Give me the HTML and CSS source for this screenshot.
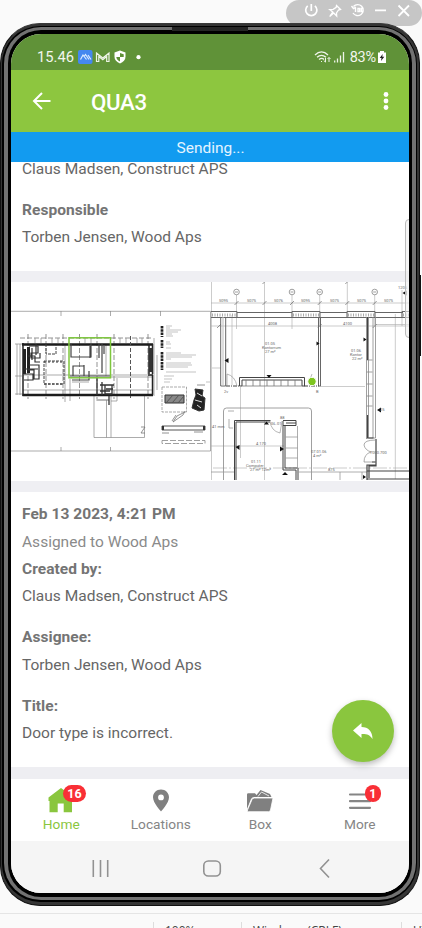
FILE: index.html
```
<!DOCTYPE html>
<html lang="en">
<head>
<meta charset="utf-8">
<title>QUA3</title>
<link rel="stylesheet" href="styles.css">
</head>
<body>
<div class="window-tools">
  <svg viewBox="0 0 136 26" width="136" height="26" fill="none" stroke="#fff" stroke-width="1.700">
    <path d="M21.700 5.800a5.600 5.600 0 1 0 7.200 0M25.300 4v7"/>
    <path d="M50.500 5.500l4 4-2 .5-2 3 .2 3-3-3-4 3.500 3-4.500-3-2.500 3.500-.2 3-2z" stroke-width="1.300"/>
    <path d="M67.500 6.500a5.500 5.500 0 1 1-.5 6.500M65.500 6l2 2.500 2.500-1.500M69.500 8v4M72 8.500h1.700v3H72zM75.300 8.500H77v3h-1.700z" stroke-width="1.400"/>
    <path d="M89 10.300h11M112.500 5.500l10.500 10.500M123 5.500l-10.500 10.500" stroke-width="1.800"/>
  </svg>
</div>
<div class="phone">
<div class="rim"><div class="metal"><div class="bezel">
<main class="screen">
  <header class="status">
    <span class="time">15.46</span>
    <svg class="status-icons" viewBox="0 0 70 16" width="70" height="16">
      <rect x="0" y="1" width="14.500" height="14" rx="2" fill="#4588ef"/>
      <path d="M2.500 10.500l2.500-4.500 3.500 4.500M6.500 7l1-1.500 3.500 5M10 6l3 4.500" stroke="#dcecff" fill="none" stroke-width="1.200"/>
      <path d="M18.500 12.500V4l6.300 5 6.200-5v8.500h-2.300V7.500l-3.900 3.300-4-3.300v5z" stroke="#eef4e8" fill="none" stroke-width="1.200"/>
      <path d="M42 1.500l5.500 2v4.300c0 3-2.200 5.400-5.500 6.700-3.300-1.300-5.500-3.700-5.500-6.700V3.500z" fill="#fff"/>
      <path d="M42 4v4h3.700V5.200zM42 8v4.500c-2-1-3.500-2.500-3.700-4.500z" fill="#5f9137"/>
      <circle cx="60.500" cy="8.200" r="2.100" fill="#fff"/>
    </svg>
    <svg class="signal" viewBox="0 0 32 14" width="32" height="14" fill="none" stroke="#edf3e8" stroke-width="1.300">
      <path d="M1 5c4-4 9-4 13 0M3 7.300c3-2.600 6-2.600 9 0M5 9.500c2-1.600 3.500-1.600 5 0"/>
      <path d="M7.500 12v-1M11.500 8v4M9.800 10.500l1.700 1.700M15 12V7.500M13.500 9L15 7.500 16.500 9" stroke-width="1"/>
      <path d="M20.700 12.500v-2M23.500 12.500V8.500M26.500 12.500V5.500M29.500 12.500V2" stroke-width="1.300"/>
    </svg>
    <span class="percent">83%</span>
    <svg viewBox="0 0 8 12" width="8" height="12"><path d="M2 0h4v1.500h2V12H0V1.500h2z" fill="#fff"/><path d="M4.700 3L1.700 7h1.800l-.5 3 3.300-4.200H4.300z" fill="#222"/></svg>
  </header>
  <div class="appbar">
    <svg viewBox="0 0 20 18" width="20" height="18" fill="none" stroke="#fff" stroke-width="2"><path d="M18.500 9H2M10 1L2 9l8 8"/></svg>
    <h1>QUA3</h1>
    <svg viewBox="0 0 6 18" width="6" height="18" fill="#fff"><circle cx="3" cy="2.500" r="2.400"/><circle cx="3" cy="9" r="2.400"/><circle cx="3" cy="15.500" r="2.400"/></svg>
  </div>
  <div class="sending">Sending...</div>
  <section class="people">
    <p class="cut">Claus Madsen, Construct APS</p>
    <p class="label">Responsible</p>
    <p>Torben Jensen, Wood Aps</p>
  </section>
  <section class="plans">
    <svg viewBox="11 282 200 198" width="200" height="198" fill="none" stroke="#333">
      <g stroke="#888" stroke-width=".7">
        <path d="M11 311.300H210.500V451H11M61 311v5M61 447v4M110.500 311v5M110.500 447v4M160.500 311v5"/>
        <path d="M94 396v41.500h50.500V396M106.500 400v37.500M111 396v41.500M96 400h13M70 379v22M65 379v23"/>
        <path d="M20 338h133M28 334v65M46 334v65M63 334v65M79.500 334v65M97 334v65M114 334v65M148 334v65" stroke="#666" stroke-dasharray="5 2"/>
        <path d="M17 344v51M15 344h7M15 376h7M15 394h7M20 344v51M23 375h130M23 390h130M35 338v5M41 338v5M52 338v5M58 338v5M85 338v5M91 338v5M120 338v5M126 338v5M137 338v5M142 338v5M154 338v58M157 355v35"/>
        <path d="M111 377h41M117 378v23h-6M65 344v35M106 344v32M72 382h17M97 400h12"/>
      </g>
      <path d="M22 344.500H153M22.500 395H153" stroke="#1c1c1c" stroke-width="2.400"/>
      <path d="M23 343v53M149 344v30M152.500 344v30M148 375h5M152.500 375v20" stroke="#222" stroke-width="1.500"/>
      <path d="M24.500 349v25M28.500 347v26" stroke="#222" stroke-width="3"/>
      <path d="M29 346h9v7h-7v5h9v-5M28 356h7v6h5M29 365h10v14h-5v-9h-6M24 374h9v6H24M32 348v12M36 344v11M24 369h14" stroke="#333" stroke-width="1.200"/>
      <path d="M46 344v10h10v-9M44 361h20v23H44z" stroke="#444" stroke-dasharray="3 1"/>
      <path d="M44 362h20M44 384h20" stroke="#333" stroke-dasharray="2 2"/>
      <path d="M71 344v13h20v-13M73 366h11v10H73zM84 365v11h-3M70 376h41M99 344v14M102 344v29M72 380h17v-9M90 346v12M104 346v8" stroke="#444" stroke-width="1.200"/>
      <path d="M100 385h14M102 382v13M105 385v9h7v-9M106 389h7M100 391h10M97 378v17M109 396v9" stroke="#333" stroke-width="1.300"/>
      <path d="M130.500 336v62" stroke="#555" stroke-dasharray="4 2"/>
      <path d="M150.800 348v24" stroke="#333" stroke-width="3.500"/>
      <rect x="69" y="337.800" width="41.500" height="40" stroke="#7dc63c" stroke-width="1.500"/>
      <path d="M162 326v11M162 340v8M162 352v18" stroke="#222" stroke-width="2.700" stroke-dasharray="2.500 .8"/>
      <path d="M166 326h6M166 328h4M166 330h15M166 332h12M166 334h6M166 336h7M166 342h4M166 344h5M166 348h5M166 353h15M166 355h30M166 357h26M166 359h5M166 363h25M166 365h26M166 367h22M166 372h30M164 376h10M164 379h8M164 382h6M206 382h4" stroke="#aaa" stroke-width=".7"/>
      <path d="M162 387h24.500v25H162z" stroke="#888" stroke-width=".7" stroke-dasharray="3 1"/>
      <path d="M165 395h19v8h-19z" fill="#888"/><path d="M166 403l7-8M172 403l7-8M178 403l6-7" stroke="#555"/>
      <path d="M185 411l-2 4-10 7 4-6 8-4M172 421l4-6" stroke="#777" stroke-width=".8"/>
      <path d="M195 389l8 1-1 6 3 2-1 12-5 1-7-3 2-8 2-5z" fill="#222"/><path d="M197 393l5 3M195 400l7 2M197 405l4 3" stroke="#ddd"/>
      <path d="M162 426h43v4h-43z" stroke="#555"/><path d="M163 426v4M204 426v4" stroke-width="2"/>
      <path d="M162 440.500h43v3h-43z" stroke="#888" stroke-width=".8" stroke-dasharray="6 2"/>
      <path d="M162 433h7M194 432h9M197 385h8M141 427h4l-4 6h4" stroke="#777" stroke-width=".8"/>
    </svg>
    <svg viewBox="211 282 198 198" width="198" height="198" fill="none" stroke="#444">
      <g stroke="#aaa" stroke-width=".6">
        <path d="M211.500 282v198M211 303H409M211 326H409M236.500 289v40M264.500 282v198M292 289v40M319.700 294v32M347.300 282v35M374.700 294v32M240.500 387v71M212 368h9M211 446h73M320 386.500h45M402 290v36M395.300 314v165M376 324.500h33M232 315v70"/>
        <path d="M213 468H409" stroke-dasharray="14 2 2 2"/>
        <path d="M234.500 305l4-4M262.500 305l4-4M290 305l4-4M317.700 305l4-4M345.300 305l4-4M372.700 305l4-4M262.500 284l4-4M345.300 284l4-4M217 328l4-4M317.700 328l4-4M372.700 328l4-4" stroke="#555"/>
      </g>
      <g fill="#fff" stroke="#777" stroke-width=".7"><circle cx="236.500" cy="292" r="2.800"/><circle cx="292" cy="292" r="2.800"/><circle cx="319.700" cy="292" r="2.800"/><circle cx="374.700" cy="292" r="2.800"/><path d="M235 292h3M290.500 292h3M318.200 292h3M373.200 292h3"/></g>
      <path d="M211 311.500h26v6h-26M237 312.500h55M237 317.500h55M292 311.500h28v6h-28zM320 312.500h27M320 317.500h27M347 311.500h28v6h-28zM375 312.500h28M375 317.500h28M409 311.500h-7v6h7" stroke="#666"/>
      <path d="M212 315h24M293 315h26M348 315h26M403 315h6" stroke="#aaa" stroke-width="3" stroke-dasharray="1 1.500"/>
      <path d="M220.700 317v69h5v-69M318.500 317v69h2v-69" stroke="#666"/>
      <path d="M223 317v69" stroke="#bbb"/>
      <path d="M239.500 386v-8.500h65V386h-2.500v-6H242v6z" stroke-width="1"/>
      <path d="M242 386h60M246 380v6M253 380v6M260 380v6M267 380v6M274 380v6M281 380v6M288 380v6M295 380v6" stroke="#777" stroke-width=".8"/>
      <path d="M226 386h14M304 386h15" stroke-dasharray="4 1 1 1"/>
      <path d="M223.500 480v-69q0-3 3-3h82q3 0 3 3v69" stroke="#888" stroke-width=".8"/>
      <path d="M234.500 480v-59.500h36M236 480v-58h34M283 421v49h13v10M285 425v43h13v12M283 420.500h13v5h-13M286 423h10" stroke-width="1"/>
      <path d="M285 437h13M285 448h13M285 458h13M297.500 426v43M229 419v9h4M234 411h-6M211 472h23M296 472h71M340 472v8M362 472v8" stroke="#999" stroke-width=".8"/>
      <path d="M227 374q8 2 10 12M227 374v12M270 421q1 10 10 12l2-12M312 374q-3 5-1 9" stroke="#888" stroke-width=".6"/>
      <path d="M366.500 317v122M368.500 317v121h7V317M373 317v121M366.500 360h6M366.500 372h6M366.500 384h6M366.500 396h6M366.500 406h6" stroke="#888" stroke-width=".8"/>
      <path d="M367.500 317v43M367.500 415v23h6M367 480v-15h9M369 478v-12h7v-4h-4M367 471h42M367 479h42M376 439v24" stroke-width="1.200"/>
      <path d="M376 440q-12 0-12 5 1 5 7 7-7 2-7 10h12" stroke="#888" stroke-width=".7"/>
      <path d="M224.500 360.500l4-2.500v5zM269 378l-2.500-3h5zM266.500 421.500l2.500 3h-5zM235.500 447l4-2v5zM284 449l-4-2.500v5zM319.500 343.500l-3-2v4zM366.500 339.500l-3-2v4zM377 410l4-2.500v5zM402.500 293l4-2.500v5zM366 477l-3-2v4zM285 472l-3 3h6z" fill="#111" stroke="none"/>
      <g class="plan-text" fill="#666" stroke="none">
        <text x="219" y="301.500">5095</text><text x="247" y="301.500">5075</text><text x="274" y="301.500">5076</text><text x="301" y="301.500">5095</text><text x="330" y="301.500">5075</text><text x="357" y="301.500">5075</text><text x="384" y="301.500">5075</text>
        <text x="268" y="325">4008</text><text x="343" y="325">4100</text>
        <text x="265" y="345">01.05</text><text x="262" y="349">Kontorrum</text><text x="265" y="353">27 m²</text>
        <text x="351" y="352">01.06</text><text x="350" y="356">Kontor</text><text x="352" y="360">22 m²</text>
        <text x="251" y="463">01.11</text><text x="246" y="467">Computer</text><text x="250" y="471">27 m² 12m²</text><text x="311" y="453">07.01.06</text><text x="313" y="457">4 m²</text>
        <text x="280" y="419">88</text><text x="271" y="425">GL.01</text><text x="224" y="393">2v</text><text x="212" y="428">41 mm</text><text x="256" y="445">4 170</text><text x="398" y="289">1205</text><text x="370" y="454">7000.700</text><text x="316" y="393">B</text><text x="328" y="471">875</text><text x="380" y="411">25</text>
      </g>
      <circle cx="312" cy="381.500" r="4.200" fill="#7ec51f" stroke="#fff"/>
    </svg>
  </section>
  <section class="details">
    <p class="label">Feb 13 2023, 4:21 PM</p>
    <p class="muted">Assigned to Wood Aps</p>
    <p class="label">Created by:</p>
    <p>Claus Madsen, Construct APS</p>
    <p class="label gap">Assignee:</p>
    <p>Torben Jensen, Wood Aps</p>
    <p class="label gap">Title:</p>
    <p>Door type is incorrect.</p>
  </section>
  <nav class="tabs">
    <div class="tab active">
      <svg viewBox="0 0 28 26" width="28" height="26" fill="#8ac63e"><path d="M14 1L1.500 10.500V14h1v11.200h8.200V16.500h6v8.700H25V14h2v-3.500z"/></svg>
      <span>Home</span><b class="badge wide">16</b>
    </div>
    <div class="tab">
      <svg viewBox="0 0 28 26" width="28" height="26"><path fill-rule="evenodd" d="M14 2.500c-4.600 0-8 3.400-8 7.800C6 16 14 24.500 14 24.500S22 16 22 10.300c0-4.400-3.400-7.800-8-7.800zm0 5a2.900 2.900 0 1 1 0 5.800 2.900 2.900 0 0 1 0-5.800z" fill="#808080"/></svg>
      <span>Locations</span>
    </div>
    <div class="tab">
      <svg viewBox="0 0 28 26" width="28" height="26" fill="#808080"><path d="M1 22V7.500q0-1.300 1.300-1.300H9L10.500 8l4-5 9.500 4 1.500 3H8.500Q6 10 5 12z"/><path d="M8.500 11H27L24.500 23q-.4 1.700-2 1.700H2.500q-1.500 0-1-1.700L6 12.500Q6.600 11 8.500 11z" stroke="#fff" stroke-width=".8"/><path d="M12 9.500l3.500-4.500 7.500 4" fill="none" stroke="#fff" stroke-width=".8"/></svg>
      <span>Box</span>
    </div>
    <div class="tab">
      <svg viewBox="0 0 28 26" width="28" height="26" stroke="#858585" stroke-width="2.200" stroke-linecap="round"><path d="M4 7.500h20M4 14.200h20M4 20.800h20"/></svg>
      <span>More</span><b class="badge">1</b>
    </div>
  </nav>
  <div class="sysnav">
    <svg viewBox="0 0 398 52" width="398" height="52" fill="none" stroke="#929292" stroke-width="1.600"><path d="M82.300 19v17M89.500 19v17M96.700 19v17M318 18.500l-8.500 9L318 36.500"/><rect x="192.800" y="20" width="16.500" height="15" rx="4.500"/></svg>
  </div>
  <div class="fab"><svg viewBox="0 0 20 17" width="20" height="17"><path d="M8.500 0v4C15.500 4 19.500 8.500 19.500 16 17 12 14 10.800 8.500 11v4L0 7.500z" fill="#fff"/></svg></div>
  <div class="edge-handle"></div>
</main>
</div></div></div>
<div class="top-key"></div>
<div class="side-key"></div>
</div>
<footer class="desktop-bar"><span class="c1">100%</span><span class="c2">Windows (CRLF)</span><span class="c3">UTF-8</span></footer>
</body>
</html>
```
FILE: styles.css
```
* { box-sizing: border-box; }
body { margin: 0; width: 422px; height: 928px; overflow: hidden; background: #fafafa; font-family: Roboto, sans-serif; position: relative; color: #666; }
p, h1 { margin: 0; }
svg { display: block; flex: none; }
.window-tools { position: absolute; left: 286px; top: 0; width: 136px; height: 26px; background: #c6c6c6; border-radius: 13px; }
.phone { position: relative; margin: 23px 0 0; width: 420px; height: 883px; border-radius: 40px; background: #353535; border: 1px solid #111; border-top-color: #3a3a3a; padding: 2px 2px 3px 1px; }
.rim { height: 100%; padding: 1px 1px 2px 2px; background: #000; border-radius: 38px; }
.metal { height: 100%; padding: 3px 4px 3px; background: #727272; border-radius: 37px; }
.bezel { height: 100%; padding: 4px 3px; background: #000; border-radius: 33px; }
.screen { position: relative; height: 100%; overflow: hidden; border-radius: 30px; background: #fff; display: flex; flex-direction: column; }
.screen > * { flex: none; }
.status { height: 36px; background: #609238; color: #f2f6ee; display: flex; align-items: center; padding: 10px 23px 0 26px; font-size: 14.700px; }
.time { width: 41px; }
.signal { margin-left: auto; margin-right: 4px; }
.percent { margin-right: 2px; font-size: 14.500px; letter-spacing: -.2px; }
.appbar { height: 62px; background: #8dc63f; display: flex; align-items: center; padding: 0 20px 0 21px; }
.appbar h1 { flex: 1; margin: 2px 0 0 39px; color: #fff; font-size: 22.300px; font-weight: 500; letter-spacing: -.3px; }
.sending { height: 29.500px; background: #129bf0; color: #e4f4ff; text-align: center; font-size: 15.500px; line-height: 32px; padding-left: 1px; }
.people { height: 109.500px; overflow: hidden; padding-left: 11px; }
.people p, .details p { font-size: 15.530px; line-height: 27.400px; }
.people .cut { margin-top: -6px; }
.people .label { margin-top: 14px; }
.people .label, .details .label { font-weight: 700; color: #747474; letter-spacing: .04px; }
.details .muted { color: #8a8a8a; }
.plans { height: 220.500px; border-top: 11px solid #efeff3; border-bottom: 11.500px solid #efeff3; display: flex; overflow: hidden; background: #fff; }
.plan-text { font-size: 4px; }
.details { height: 287.500px; padding: 9.600px 11px 0; border-bottom: 12px solid #eeeef2; }
.details .gap { margin-top: 13.700px; }
.tabs { height: 62px; display: grid; grid-template-columns: repeat(4, 1fr); }
.tab { position: relative; display: flex; flex-direction: column; align-items: center; padding: 8px 0 0 1px; font-size: 13.700px; line-height: 23px; color: #858585; letter-spacing: 0; }
.tab.active { color: #8ac63e; }
.badge { position: absolute; left: 55px; top: 6px; width: 16.500px; height: 17px; border-radius: 9px; background: #f92f36; color: #fff; font-size: 12.500px; line-height: 18px; text-align: center; }
.badge.wide { left: 52px; width: 23px; }
.sysnav { flex: 1; background: #f5f5f5; }
.fab { position: absolute; left: 321px; top: 666px; width: 62px; height: 62px; border-radius: 50%; background: #8ac63e; box-shadow: 0 3px 6px #0004; display: flex; align-items: center; justify-content: center; }
.edge-handle { position: absolute; right: -4px; top: 185px; width: 8px; height: 119px; border: 1px solid #bbb; border-radius: 5px; background: #eee9; }
.top-key { position: absolute; left: 171px; top: 3px; width: 76px; height: 4px; background: #252525; }
.side-key { position: absolute; right: -2px; top: 251px; width: 2px; height: 81px; background: #111; }
.desktop-bar { position: relative; margin-top: 7px; height: 15px; overflow: hidden; border-top: 1px solid #e5e5e5; display: grid; grid-template-columns: 153px 88px 160px 1fr; font: 12px "Open Sans", sans-serif; color: #444; }
.desktop-bar span { border-left: 1px solid #ddd; padding: 2px 0 0 11px; margin-top: 8px; line-height: 14px; white-space: nowrap; }
.c1 { grid-column: 2; }
```
